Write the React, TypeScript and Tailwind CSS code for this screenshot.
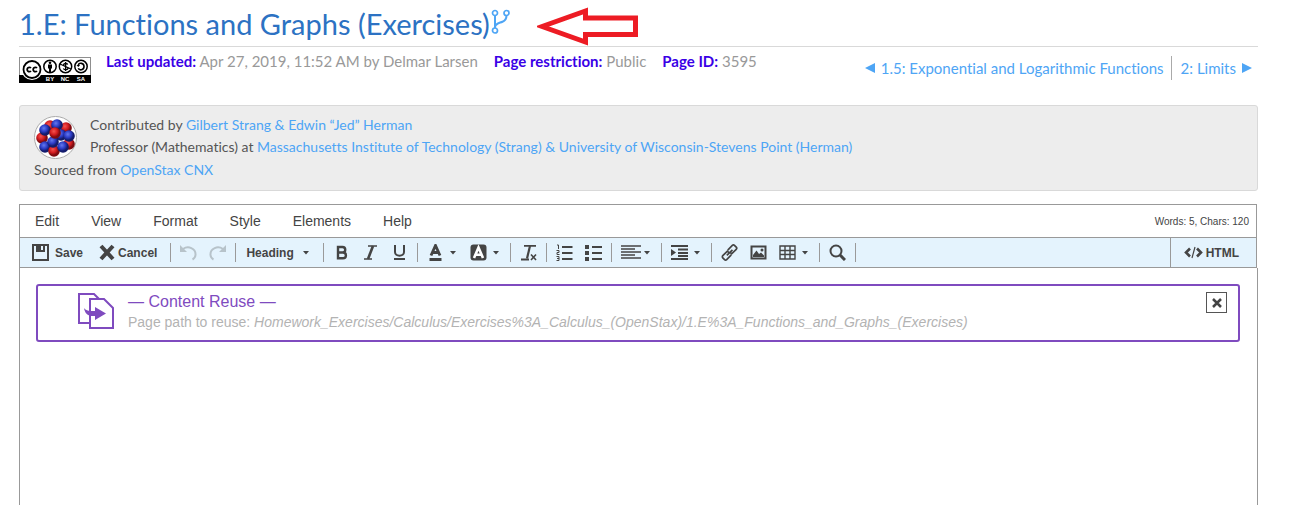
import type { ReactNode } from 'react'

const link = 'text-[#4ea5f5] hover:underline'

function CcBadge() {
  return (
    <svg className="h-[26px] w-[72px] shrink-0" viewBox="0 0 72 26" role="img" aria-label="CC BY-NC-SA">
      <rect x="0.5" y="0.5" width="71" height="25" fill="#fff" stroke="#8f8f8f" />
      <rect x="0" y="18" width="72" height="8" fill="#000" />
      <circle cx="13" cy="12.5" r="10.5" fill="#fff" />
      <circle cx="13" cy="12.5" r="8.5" fill="#fff" stroke="#000" strokeWidth="1.8" />
      <g fill="none" stroke="#000" strokeWidth="1.8">
        <path d="M12 11a2.2 2.2 0 1 0 0 3M18 11a2.2 2.2 0 1 0 0 3" />
      </g>
      <g fill="#fff" stroke="#000" strokeWidth="1.5">
        <circle cx="31" cy="9.5" r="6.2" />
        <circle cx="46.5" cy="9.5" r="6.2" />
        <circle cx="62" cy="9.5" r="6.2" />
      </g>
      <circle cx="31" cy="5.8" r="1.3" />
      <path d="M29 7.5h4v4h-1v3.5h-2v-3.5h-1z" />
      <g fill="none" stroke="#000" strokeWidth="1.3">
        <path d="M41 7l11 5M48.8 7.5c-1-1.5-4.3-1.3-4.3.5 0 2 4.5 1.3 4.5 3.3 0 1.7-3.5 2-4.7.2M46.6 5v9" />
        <path strokeWidth="1.6" d="M59.3 8c.8-2.7 5.7-2.2 5.7 1.5s-4.7 4.3-5.7 1.7" />
      </g>
      <path d="M57.5 8h3.6l-1.8 2z" />
      <g fill="#fff" fontFamily="Liberation Sans, sans-serif" fontWeight="bold" fontSize="6" textAnchor="middle">
        <text x="31" y="24">BY</text>
        <text x="46" y="24">NC</text>
        <text x="62" y="24">SA</text>
      </g>
    </svg>
  )
}

const nucleons = [
  [16, 10, 'red'], [32, 12, 'red'], [8, 22, 'red'], [35, 28, 'red'], [27, 19, 'blue'],
  [23, 9, 'blue'], [11, 14, 'blue'], [35, 20, 'blue'], [11, 31, 'blue'], [20, 35, 'red'],
  [29, 31, 'blue'], [19, 26, 'blue'], [21, 17, 'red'],
] as const

function Atom() {
  return (
    <svg className="mt-0.5 size-[43px] shrink-0" viewBox="0 0 43 43" aria-hidden="true">
      <defs>
        <radialGradient id="red" cx="0.4" cy="0.35">
          <stop offset="0" stopColor="#f5554f" />
          <stop offset="0.6" stopColor="#d31c20" />
          <stop offset="1" stopColor="#7e0b10" />
        </radialGradient>
        <radialGradient id="blue" cx="0.4" cy="0.35">
          <stop offset="0" stopColor="#6478ee" />
          <stop offset="0.6" stopColor="#2b3bc4" />
          <stop offset="1" stopColor="#141c6c" />
        </radialGradient>
      </defs>
      <circle cx="21.5" cy="21.5" r="21" fill="#fff" stroke="#aaa" />
      {nucleons.map(([x, y, tone]) => (
        <circle key={`${x}-${y}`} cx={x} cy={y} r="5.8" fill={`url(#${tone})`} />
      ))}
    </svg>
  )
}

function Icon({ children, w = 17 }: { children: ReactNode; w?: number }) {
  return (
    <svg width={w} height="17" viewBox={`0 0 ${w} 17`} fill="none" stroke="#444" strokeWidth="2" className="shrink-0" aria-hidden="true">
      {children}
    </svg>
  )
}

function Caret() {
  return (
    <svg width="6" height="4" viewBox="0 0 6 4" className="shrink-0" aria-hidden="true">
      <path d="M0 0h6L3 3.5z" fill="#444" />
    </svg>
  )
}

function Group({ children }: { children: ReactNode }) {
  return (
    <div className="flex h-[19px] items-center border-r border-[#9a9a9a] px-[3px]">{children}</div>
  )
}

function Tool({ label, children }: { label: string; children: ReactNode }) {
  return (
    <button type="button" aria-label={label} className="flex h-7 w-[29px] items-center justify-center">
      {children}
    </button>
  )
}

function DropTool({ label, children }: { label: string; children: ReactNode }) {
  return (
    <button type="button" aria-label={label} className="flex h-7 w-[43px] items-center justify-between pr-2 pl-1.5">
      {children}
      <Caret />
    </button>
  )
}

function Toolbar() {
  return (
    <div className="flex h-[30px] items-center border-b border-[#999] bg-[#e4f3fd] text-xs font-bold text-[#444]">
      <div className="flex h-[19px] items-center gap-4 border-r border-[#9a9a9a] pr-[13px] pl-3">
        <button type="button" className="flex items-center gap-1.5">
          <Icon>
            <path d="M1 1h15v15H1z" />
            <path d="M4 1h9v7H4z" fill="#444" stroke="none" />
            <path d="M9 2h2v4H9z" fill="#e4f3fd" stroke="none" />
          </Icon>
          Save
        </button>
        <button type="button" className="flex items-center gap-0.5">
          <Icon>
            <path d="M2 2l12 13M14 2L2 15" strokeWidth="4" />
          </Icon>
          Cancel
        </button>
      </div>
      <Group>
        <Tool label="Undo">
          <Icon>
            <path d="M3 5C8 1.500 16 4 15.500 11c-.2 2.500-1.500 3.700-3 4.500" stroke="#b7c3ca" />
            <path d="M0 1v7h7z" fill="#b7c3ca" stroke="none" />
          </Icon>
        </Tool>
        <Tool label="Redo">
          <Icon>
            <path d="M14 5C9 1.500 1 4 1.500 11c.2 2.500 1.500 3.700 3 4.500" stroke="#b7c3ca" />
            <path d="M17 1v7h-7z" fill="#b7c3ca" stroke="none" />
          </Icon>
        </Tool>
      </Group>
      <Group>
        <button type="button" className="flex h-7 w-[81px] items-center justify-between pr-[11px] pl-[7px]">
          Heading
          <Caret />
        </button>
      </Group>
      <Group>
        <Tool label="Bold">
          <Icon>
            <path d="M5 3h4.500a2.700 2.700 0 0 1 0 5.500H5zM5 8.500h5a2.900 2.900 0 0 1 0 5.800H5z" strokeWidth="2.4" />
          </Icon>
        </Tool>
        <Tool label="Italic">
          <Icon>
            <path d="M6 2h9M2 15h8" strokeWidth="1.6" />
            <path d="M11 2L6 15" strokeWidth="2.6" />
          </Icon>
        </Tool>
        <Tool label="Underline">
          <Icon>
            <path d="M4 1v7c0 5 9 5 9 0V1" />
            <path d="M3 15h11" />
          </Icon>
        </Tool>
      </Group>
      <Group>
        <DropTool label="Text colour">
          <Icon>
            <path d="M4 11.500L8.500 1.500l4.500 10M5.500 8.500h6" strokeWidth="2.8" />
            <path d="M2.500 15.500h12" strokeWidth="3" />
          </Icon>
        </DropTool>
        <DropTool label="Highlight colour">
          <Icon>
            <rect x="0.5" y="0.5" width="16" height="16" rx="3" fill="#444" stroke="none" />
            <path d="M4 14l4.500-10.500L13 14M5.500 10.800h6" stroke="#fff" strokeWidth="2.6" />
          </Icon>
        </DropTool>
      </Group>
      <Group>
        <Tool label="Remove format">
          <Icon>
            <path d="M4 1.800h12M1 15.500h8" strokeWidth="1.8" />
            <path d="M10 2L7 14.500" strokeWidth="2.2" />
            <path d="M11 10.500l5 5.500M16 10.500l-5 5.500" strokeWidth="1.6" />
          </Icon>
        </Tool>
      </Group>
      <Group>
        <Tool label="Numbered list">
          <Icon>
            <path d="M6 3h10.500M6 9h10.500M6 15h10.500" />
            <path d="M1 1h1.500v4M.5 6.500h2.500v2H1v2h2.500M.5 12.500h2.500v4H.5M1 14.500h2" strokeWidth="1" />
          </Icon>
        </Tool>
        <Tool label="Bulleted list">
          <Icon>
            <path d="M7 3h10M7 9h10M7 15h10" />
            <path d="M0 3h4M0 9h4M0 15h4" strokeWidth="4" />
          </Icon>
        </Tool>
      </Group>
      <Group>
        <DropTool label="Align">
          <Icon w={20}>
            <path d="M0 2h20M0 5h14M0 8h20M0 11h14M0 14h20" strokeWidth="1.3" />
          </Icon>
        </DropTool>
      </Group>
      <Group>
        <DropTool label="Indent">
          <Icon>
            <path d="M0 2h17M7 5.500h10M7 9h10M7 12h10M0 15h17" strokeWidth="1.8" />
            <path d="M0 5l5 3.500L0 12z" fill="#444" stroke="none" />
          </Icon>
        </DropTool>
      </Group>
      <Group>
        <Tool label="Link">
          <Icon>
            <g transform="rotate(-45 8.5 8.5)">
              <path d="M8 11.500H1.500a1.500 1.500 0 0 1-1.500-1.500V7.500A1.500 1.500 0 0 1 1.500 6H8v2M9 5.500h6.500A1.500 1.500 0 0 1 17 7v2.500a1.500 1.500 0 0 1-1.500 1.500H9V9M4.500 8.700h8" strokeWidth="1.7" />
            </g>
          </Icon>
        </Tool>
        <Tool label="Image">
          <Icon>
            <path d="M1.500 2.500h14v12h-14z" />
            <path d="M3 13V11l3.500-4.500L9 10l2-1.500 3 3V13z" fill="#444" stroke="none" />
            <circle cx="12" cy="6" r="1.5" fill="#444" stroke="none" />
          </Icon>
        </Tool>
        <DropTool label="Table">
          <Icon>
            <path d="M1 2h15v13H1zM1 6.500h15M1 10.500h15M6 2v13M11 2v13" strokeWidth="1.4" />
          </Icon>
        </DropTool>
      </Group>
      <Group>
        <Tool label="Find">
          <Icon>
            <circle cx="7" cy="7" r="5.5" />
            <path d="M11 11l5 5" strokeWidth="3" />
          </Icon>
        </Tool>
      </Group>
      <button type="button" className="ml-auto flex h-[29px] items-center gap-[3px] border-l border-[#999] pr-[17px] pl-[13px]">
        <Icon w={19}>
          <path d="M6 4.500L2 8.500l4 4M13 4.500l4 4-4 4" strokeWidth="2.6" />
          <path d="M11 3L8 14" strokeWidth="1.2" />
        </Icon>
        HTML
      </button>
    </div>
  )
}

const menus = ['Edit', 'View', 'Format', 'Style', 'Elements', 'Help']

export default function App() {
  return (
    <div className="flex min-h-screen flex-col bg-white pr-[39px] pl-[19px] font-['Lato',sans-serif] [font-variant-ligatures:none]">
      <header className="flex h-[47px] items-start border-b border-[#d9d9d9]">
        <h1 className="pt-1 text-[29px] leading-10 whitespace-nowrap text-[#2c72c3]">
          1.E: Functions and Graphs (Exercises)
        </h1>
        <a href="#fork" aria-label="Fork this page" className="pt-[9px] pl-px">
          <svg width="20" height="26" viewBox="0 0 20 26" fill="none" stroke="#4ea5f5" strokeWidth="2" aria-hidden="true">
            <circle cx="4" cy="4" r="2.5" strokeWidth="1.7" />
            <circle cx="15.5" cy="4" r="2.5" strokeWidth="1.7" />
            <circle cx="4" cy="21.500" r="2.5" strokeWidth="1.7" />
            <path d="M4 6.500V19M15.500 6.500c0 3.500-1 5-4 6.200-4 1.600-7 1.800-7.500 5.300" />
          </svg>
        </a>
        <svg className="mt-[7px] ml-[26px] h-[39px] w-[102px] shrink-0" viewBox="0 0 102 39" fill="#fff" stroke="#ed1c24" strokeWidth="5" aria-hidden="true">
          <path d="M5 19.500L48.500 4v7H98.500v16.500H48.500V35z" />
        </svg>
      </header>

      <div className="flex items-start justify-between">
        <div className="flex items-start">
          <div className="mt-2.5 mr-[15px]"><CcBadge /></div>
          <div className="mt-[3px] flex gap-4 text-[15px] leading-[22px] whitespace-nowrap text-[#999]">
            <p><b className="text-[#3a00e6]">Last updated:</b> Apr 27, 2019, 11:52 AM by Delmar Larsen</p>
            <p><b className="text-[#3a00e6]">Page restriction:</b> Public</p>
            <p><b className="text-[#3a00e6]">Page ID:</b> 3595</p>
          </div>
        </div>
        <nav className="mt-[9px] mr-1.5 flex text-[15px] leading-6 whitespace-nowrap">
          <a href="#prev" className={`flex items-center gap-1.5 border-r border-[#aaa] pr-[7px] ${link}`}>
            <svg width="10" height="10" viewBox="0 0 10 10" fill="currentColor" aria-hidden="true"><path d="M10 0v10L0 5z" /></svg>
            1.5: Exponential and Logarithmic Functions
          </a>
          <a href="#next" className={`flex items-center gap-1.5 pl-[9px] ${link}`}>
            2: Limits
            <svg width="10" height="10" viewBox="0 0 10 10" fill="currentColor" aria-hidden="true"><path d="M0 0v10l10-5z" /></svg>
          </a>
        </nav>
      </div>

      <section className="mt-[22px] rounded-[3px] border border-[#d9d9d9] bg-[#ededed] px-3.5 pt-2 pb-[9px] text-sm leading-[22px] text-[#555]">
        <div className="flex h-[45px] gap-[13px]">
          <Atom />
          <div>
            <p>Contributed by <a href="#authors" className={link}>Gilbert Strang &amp; Edwin “Jed” Herman</a></p>
            <p>Professor (Mathematics) at <a href="#schools" className={link}>Massachusetts Institute of Technology (Strang) &amp; University of Wisconsin-Stevens Point (Herman)</a></p>
          </div>
        </div>
        <p>Sourced from <a href="#openstax" className={link}>OpenStax CNX</a></p>
      </section>

      <main className="mt-[13px] flex flex-1 flex-col font-['Liberation_Sans',sans-serif]">
        <div className="mr-px border-x border-t border-[#999]">
          <div className="flex h-[33px] items-center justify-between border-b border-[#999] pr-[7px] pl-[15px]">
            <div className="flex gap-8 text-sm text-[#444]">
              {menus.map((name) => (
                <button key={name} type="button">{name}</button>
              ))}
            </div>
            <span className="text-[10px] text-[#444]">Words: 5, Chars: 120</span>
          </div>
          <Toolbar />
        </div>
        <div className="flex-1 border-x border-[#999] px-4 pt-4">
          <div className="mr-px flex h-[58px] items-start rounded-[3px] border-2 border-[#7f4bbf] pt-1.5 pr-[11px] pl-[39px]">
            <svg className="shrink-0" width="38" height="38" viewBox="0 0 38 38" fill="#fff" stroke="#7f4bbf" strokeWidth="2" aria-hidden="true">
              <path d="M2 2h15l5 5v24H2z" />
              <path d="M13 7h14l9 9v20H13z" />
              <path d="M7 16c2 3 6 3 11 3v-4l11 6.500L18 28v-4C11 24.500 8 22 7 16z" fill="#7f4bbf" stroke="none" />
            </svg>
            <div className="ml-[13px] flex-1">
              <h2 className="text-base leading-5 text-[#7f4bbf]">— Content Reuse —</h2>
              <p className="text-sm leading-5 text-[#b3b3b3]">
                Page path to reuse: <i>Homework_Exercises/Calculus/Exercises%3A_Calculus_(OpenStax)/1.E%3A_Functions_and_Graphs_(Exercises)</i>
              </p>
            </div>
            <button type="button" aria-label="Remove" className="flex size-[21px] items-center justify-center border border-[#555]">
              <svg width="10" height="10" viewBox="0 0 10 10" stroke="#444" strokeWidth="2.5" aria-hidden="true">
                <path d="M1 1l8 8M9 1L1 9" />
              </svg>
            </button>
          </div>
        </div>
      </main>
    </div>
  )
}
